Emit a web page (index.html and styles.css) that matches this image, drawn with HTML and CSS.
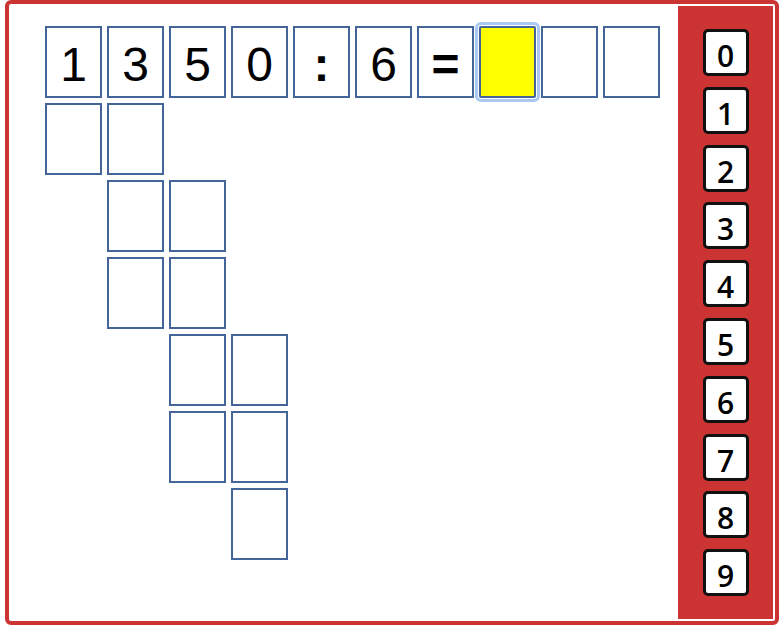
FILE: index.html
```html
<!DOCTYPE html>
<html>
<head>
<meta charset="utf-8">
<link rel="stylesheet" href="styles.css">
</head>
<body>
<div class="frame">
  <div class="work">
    <div class="grid">
      <div class="cell r1 c1">1</div>
      <div class="cell r1 c2">3</div>
      <div class="cell r1 c3">5</div>
      <div class="cell r1 c4">0</div>
      <div class="cell r1 c5 sym">:</div>
      <div class="cell r1 c6">6</div>
      <div class="cell r1 c7 sym">=</div>
      <div class="cell r1 c8 active"></div>
      <div class="cell r1 c9"></div>
      <div class="cell r1 c10"></div>

      <div class="cell r2 c1"></div>
      <div class="cell r2 c2"></div>

      <div class="cell r3 c2"></div>
      <div class="cell r3 c3"></div>

      <div class="cell r4 c2"></div>
      <div class="cell r4 c3"></div>

      <div class="cell r5 c3"></div>
      <div class="cell r5 c4"></div>

      <div class="cell r6 c3"></div>
      <div class="cell r6 c4"></div>

      <div class="cell r7 c4"></div>
    </div>
  </div>
  <div class="panel">
    <div class="key">0</div>
    <div class="key">1</div>
    <div class="key">2</div>
    <div class="key">3</div>
    <div class="key">4</div>
    <div class="key">5</div>
    <div class="key">6</div>
    <div class="key">7</div>
    <div class="key">8</div>
    <div class="key">9</div>
  </div>
</div>
</body>
</html>
```
FILE: styles.css
```css
html, body {
  margin: 0;
  padding: 0;
  background: #ffffff;
}

.frame {
  box-sizing: border-box;
  margin-left: 5px;
  width: 774px;
  height: 625px;
  border: 4px solid #cc3333;
  border-radius: 6px;
  display: flex;
  background: #ffffff;
}

.work {
  flex: 1;
  padding: 22px 0 0 36px;
}

.grid {
  display: grid;
  grid-template-columns: repeat(10, 57px);
  grid-auto-rows: 72px;
  gap: 5px;
}

.cell {
  box-sizing: border-box;
  border: 2px solid #44659a;
  background: #ffffff;
  font-family: "Liberation Sans", Arial, sans-serif;
  font-size: 48px;
  color: #000000;
  text-align: center;
  padding-top: 7px;
  line-height: 60px;
}

.cell.sym {
  font-weight: bold;
}

.cell.active {
  background: #ffff00;
  outline: 3px solid #a9c9f2;
  outline-offset: 1px;
  border-radius: 2px;
}

.r1 { grid-row: 1; }
.r2 { grid-row: 2; }
.r3 { grid-row: 3; }
.r4 { grid-row: 4; }
.r5 { grid-row: 5; }
.r6 { grid-row: 6; }
.r7 { grid-row: 7; }
.c1 { grid-column: 1; }
.c2 { grid-column: 2; }
.c3 { grid-column: 3; }
.c4 { grid-column: 4; }
.c5 { grid-column: 5; }
.c6 { grid-column: 6; }
.c7 { grid-column: 7; }
.c8 { grid-column: 8; }
.c9 { grid-column: 9; }
.c10 { grid-column: 10; }

.panel {
  width: 95px;
  margin: 2px 2px 2px 0;
  background: #cc3333;
  display: flex;
  flex-direction: column;
  align-items: center;
  padding-top: 23px;
  gap: 10.8px;
}

.key {
  box-sizing: border-box;
  width: 46px;
  height: 47px;
  border: 3px solid #111111;
  border-radius: 5px;
  background: #ffffff;
  font-family: "Open Sans", sans-serif;
  font-weight: 600;
  font-size: 30px;
  color: #000000;
  text-align: center;
  line-height: 48px;
}
```
